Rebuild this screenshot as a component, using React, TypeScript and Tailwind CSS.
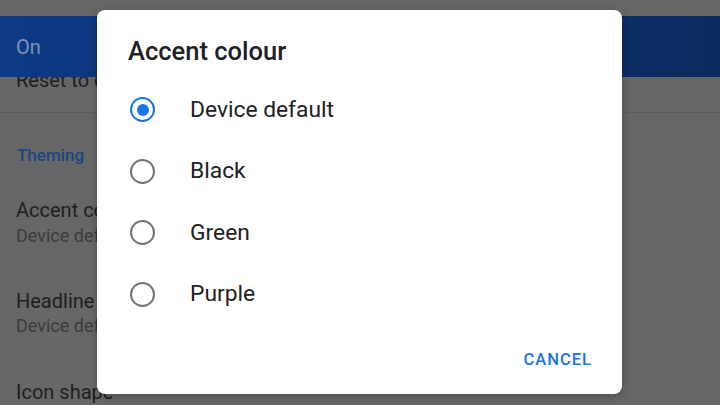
import React from "react";

const options = [
  { label: "Device default", selected: true },
  { label: "Black", selected: false },
  { label: "Green", selected: false },
  { label: "Purple", selected: false },
];

function Radio({ selected }: { selected: boolean }) {
  return (
    <div
      className={
        selected
          ? "flex h-[25px] w-[25px] items-center justify-center rounded-full border-[2.5px] border-[#1a73e8]"
          : "flex h-[25px] w-[25px] items-center justify-center rounded-full border-[2.5px] border-[#737373]"
      }
    >
      {selected && <div className="h-[12px] w-[12px] rounded-full bg-[#1a73e8]" />}
    </div>
  );
}

export default function App() {
  return (
    <div
      className="relative h-[405px] w-[720px] overflow-hidden bg-[#676767]"
      style={{ fontFamily: "Roboto, 'Noto Sans', sans-serif" }}
    >
      {/* settings screen, dimmed behind the dialog */}
      <div className="flex h-full flex-col">
        <div className="h-[16px] shrink-0" />
        <div className="flex h-[61px] shrink-0 items-center bg-gradient-to-r from-[#0d3a86] to-[#0a2b5e] pl-[16px]">
          <span className="text-[20px] leading-[24px] text-[#8093b3]">On</span>
        </div>
        <div className="h-[35px] shrink-0 overflow-hidden pl-[16px]">
          <div className="-mt-[9px] text-[20px] leading-[24px] text-[#1e1e1e]">Reset to default</div>
        </div>
        <div className="h-px shrink-0 bg-[#5d5d5d]" />
        <div className="mt-[32px] pl-[17px] text-[17px] font-medium leading-[20px] text-[#1d4480]">Theming</div>
        <div className="mt-[33px] pl-[16px] text-[20px] leading-[24px] text-[#1e1e1e]">Accent colour</div>
        <div className="mt-[3px] pl-[16px] text-[18px] leading-[22px] text-[#3b3b3b]">Device default</div>
        <div className="mt-[42px] pl-[16px] text-[20px] leading-[24px] text-[#1e1e1e]">Headline font</div>
        <div className="mt-[2px] pl-[16px] text-[18px] leading-[22px] text-[#3b3b3b]">Device default</div>
        <div className="mt-[43px] pl-[16px] text-[20px] leading-[24px] text-[#1e1e1e]">Icon shape</div>
      </div>

      {/* accent colour dialog */}
      <div className="absolute left-[97px] top-[10px] flex h-[384px] w-[525px] flex-col rounded-[8px] bg-white shadow-[0_2px_8px_rgba(0,0,0,0.25)]">
        <div className="pl-[31px] pt-[26px] text-[25.5px] font-medium leading-[30px] text-[#202124]">
          Accent colour
        </div>
        <div className="mt-[13px] flex flex-col">
          {options.map((o) => (
            <div key={o.label} className="flex h-[61.5px] items-center pl-[33px]">
              <Radio selected={o.selected} />
              <span className="ml-[35px] text-[22.8px] leading-[26px] text-[#202124]">{o.label}</span>
            </div>
          ))}
        </div>
        <div className="mt-auto flex justify-end pb-[24px] pr-[30px]">
          <span className="text-[16.5px] font-medium leading-[20px] tracking-[1px] text-[#1a73e8]">CANCEL</span>
        </div>
      </div>
    </div>
  );
}
